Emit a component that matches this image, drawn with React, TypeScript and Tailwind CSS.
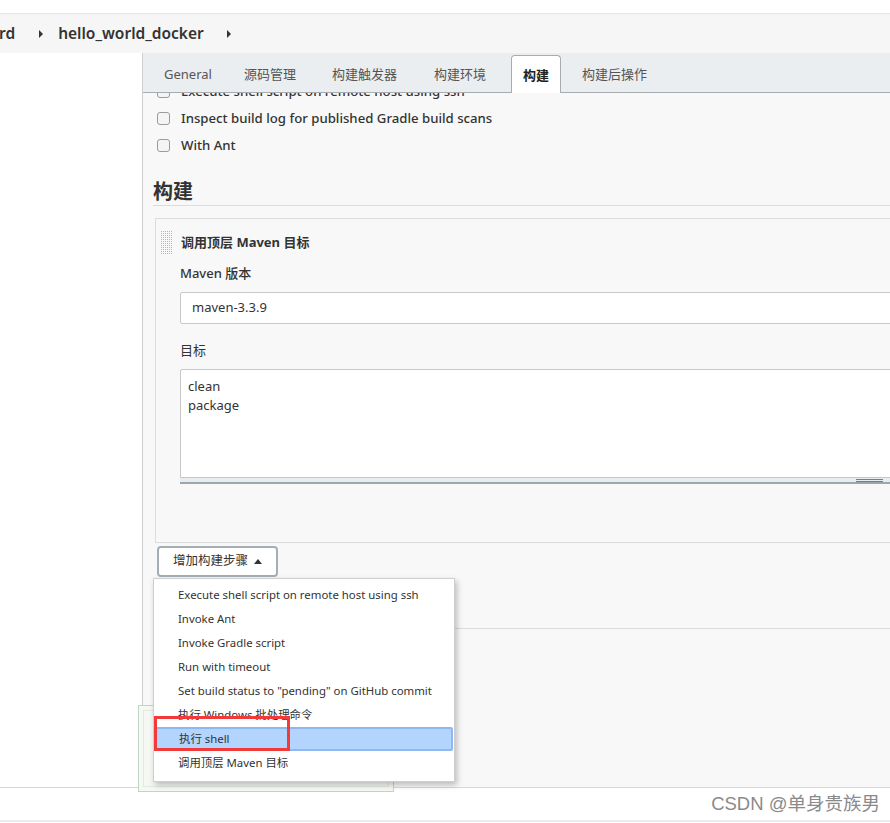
import React from 'react';

const font = "font-['Noto_Sans','Noto_Sans_CJK_SC',sans-serif]";

// tab label + width of its slot (measured from the left of one label to the next)
const tabs: { label: string; w: string; active?: boolean }[] = [
  { label: 'General', w: 'w-[80px]' },
  { label: '源码管理', w: 'w-[88px]' },
  { label: '构建触发器', w: 'w-[102px]' },
  { label: '构建环境', w: 'w-[77px]' },
  { label: '构建', w: 'w-[49px]', active: true },
  { label: '构建后操作', w: 'w-[90px]' },
];

const menuItems = [
  'Execute shell script on remote host using ssh',
  'Invoke Ant',
  'Invoke Gradle script',
  'Run with timeout',
  'Set build status to "pending" on GitHub commit',
  '执行 Windows 批处理命令',
  '执行 shell',
  '调用顶层 Maven 目标',
];

const Checkbox: React.FC = () => (
  <span className="inline-block w-[13px] h-[13px] rounded-[3px] border border-[#9a9a9a] bg-[#f4f4f4] shrink-0" />
);

const Caret: React.FC = () => (
  <svg width="6" height="8" viewBox="0 0 6 8" className="fill-[#333]">
    <path d="M1 0 L5 4 L1 8 Z" />
  </svg>
);

const DragHandle: React.FC = () => (
  <svg width="12" height="24" viewBox="0 0 12 24">
    <defs>
      <pattern id="dots" width="2" height="2" patternUnits="userSpaceOnUse">
        <rect width="1" height="1" fill="#b5b5b5" />
      </pattern>
    </defs>
    <rect width="12" height="24" fill="url(#dots)" />
  </svg>
);

const App: React.FC = () => {
  return (
    <div className={`${font} w-[890px] h-[823px] overflow-hidden bg-white text-[#333] relative`}>
      {/* top strip */}
      <div className="h-[14px] border-b border-[#e6e6e6] bg-white" />
      {/* breadcrumb */}
      <div className="h-[39px] bg-[#f6f6f6] flex items-center text-[15.5px] font-semibold text-[#333]">
        <span className="-ml-[1px]">rd</span>
        <span className="ml-[23px]"><Caret /></span>
        <span className="ml-[14px]">hello_world_docker</span>
        <span className="ml-[22px]"><Caret /></span>
      </div>

      <div className="flex h-[734px]">
        <div className="w-[142px] bg-white shrink-0" />
        <div className="flex-1 border-l border-[#cfcfcf] bg-[#f8f8f8] flex flex-col min-w-0">
          {/* tab bar */}
          <div className="h-[40px] bg-[#eaeef0] border-b border-[#a7acb0] flex items-end pl-[21px] text-[13px] text-[#555]">
            {tabs.map((t) =>
              t.active ? (
                <div key={t.label} className="w-[71px] shrink-0">
                  <div className="w-[50px] h-[38px] -mb-[1px] bg-white border border-b-0 border-[#a7acb0] rounded-t-[4px] flex items-center justify-center pt-[2px] font-semibold text-[#222]">
                    {t.label}
                  </div>
                </div>
              ) : (
                <div key={t.label} className={`${t.w} shrink-0 h-[37px] flex items-center pt-[3px]`}>
                  {t.label}
                </div>
              )
            )}
          </div>

          {/* content */}
          <div className="flex-1 overflow-hidden">
            <div className="-mt-[15px] pl-[14px] text-[13.2px] font-medium text-[#333]">
              <div className="h-[27px] flex items-center gap-[11px]">
                <Checkbox />
                <span>Execute shell script on remote host using ssh</span>
              </div>
              <div className="h-[27px] flex items-center gap-[11px]">
                <Checkbox />
                <span>Inspect build log for published Gradle build scans</span>
              </div>
              <div className="h-[27px] flex items-center gap-[11px]">
                <Checkbox />
                <span>With Ant</span>
              </div>
            </div>

            <div className="ml-[10px] mt-[14px] -mr-4 border-b border-[#dcdcdc] pt-[5px]">
              <h2 className="text-[20px] font-bold leading-[27px] text-[#333]">构建</h2>
            </div>

            <div className="ml-[12px] mt-[12px] -mr-6 border border-[#dcdcdc] bg-[#f8f8f8] h-[325px]">
              <div className="flex items-center h-[24px] mt-[12px] pl-[5px]">
                <DragHandle />
                <span className="ml-[8px] text-[13px] font-bold text-[#333]">调用顶层 Maven 目标</span>
              </div>
              <div className="pl-[24px]">
                <div className="mt-[9px] h-[20px] text-[13px] font-medium flex items-center">Maven 版本</div>
                <div className="mt-[8px] h-[32px] bg-white border border-[#c8c8c8] rounded-[2px] flex items-center pl-[11px] text-[13px]">
                  maven-3.3.9
                </div>
                <div className="mt-[17px] h-[20px] text-[13px] flex items-center">目标</div>
                <div className="mt-[8px] h-[109px] bg-white border border-[#c8c8c8] rounded-t-[2px] pl-[7px] pt-[7px] text-[13px] leading-[19px]">
                  <div>clean</div>
                  <div>package</div>
                </div>
                <div className="h-[6px] bg-[#e6ecef] border-b-[2px] border-[#9ba6ad] relative">
                  <div className="absolute left-[676px] top-[1px] w-[27px] h-[1px] bg-[#7d7d7d]" />
                  <div className="absolute left-[676px] top-[3px] w-[27px] h-[1px] bg-[#7d7d7d]" />
                </div>
              </div>
            </div>

            <div className="ml-[14px] mt-[3px]">
              <button className="h-[31px] w-[121px] bg-white border-[2px] border-[#a5aeb4] rounded-[4px] flex items-center justify-center gap-[6px] text-[12.5px] text-[#333]">
                增加构建步骤
                <svg width="8" height="5" viewBox="0 0 8 5" className="fill-[#333]">
                  <path d="M0 5 L4 0 L8 5 Z" />
                </svg>
              </button>
            </div>

            <div className="ml-[10px] mt-[51px] border-t border-[#dcdcdc]" />
          </div>
        </div>
      </div>

      {/* footer */}
      <div className="h-[33px] border-t border-[#d8d8d8] bg-white flex items-center justify-end pr-[10px]">
        <span className="text-[18.5px] text-[#8a8a8a] font-['Liberation_Sans','Noto_Sans_CJK_SC',sans-serif]">
          CSDN @单身贵族男
        </span>
      </div>
      <div className="h-[2px] bg-[#e8eef3]" />

      {/* save bar behind menu */}
      <div className="absolute left-[138px] top-[705px] w-[256px] h-[87px] border border-[#bcd8c4] bg-[#f6f8f3]">
        <div className="absolute left-[4px] top-[4px] right-[4px] bottom-[4px] border border-[#e3e8e0]" />
      </div>

      {/* dropdown menu */}
      <div className="absolute left-[153px] top-[578px] w-[302px] bg-white border border-[#cfcfcf] shadow-[2px_3px_6px_rgba(0,0,0,0.25)] pt-[4px] pb-[6px] text-[11.4px] text-[#333] whitespace-nowrap">
        {menuItems.map((m) =>
          m === '执行 shell' ? (
            <div
              key={m}
              className="h-[24px] flex items-center bg-[#b3d4fc] border-[2px] border-[#8fb8f3] rounded-[2px] mx-[1px] pl-[22px]"
            >
              {m}
            </div>
          ) : (
            <div key={m} className="h-[24px] flex items-center pl-[24px]">
              {m}
            </div>
          )
        )}
      </div>

      {/* red highlight */}
      <div className="absolute left-[154px] top-[716px] w-[136px] h-[35px] border-[3px] border-[#f23a3a]" />
    </div>
  );
};

export default App;
